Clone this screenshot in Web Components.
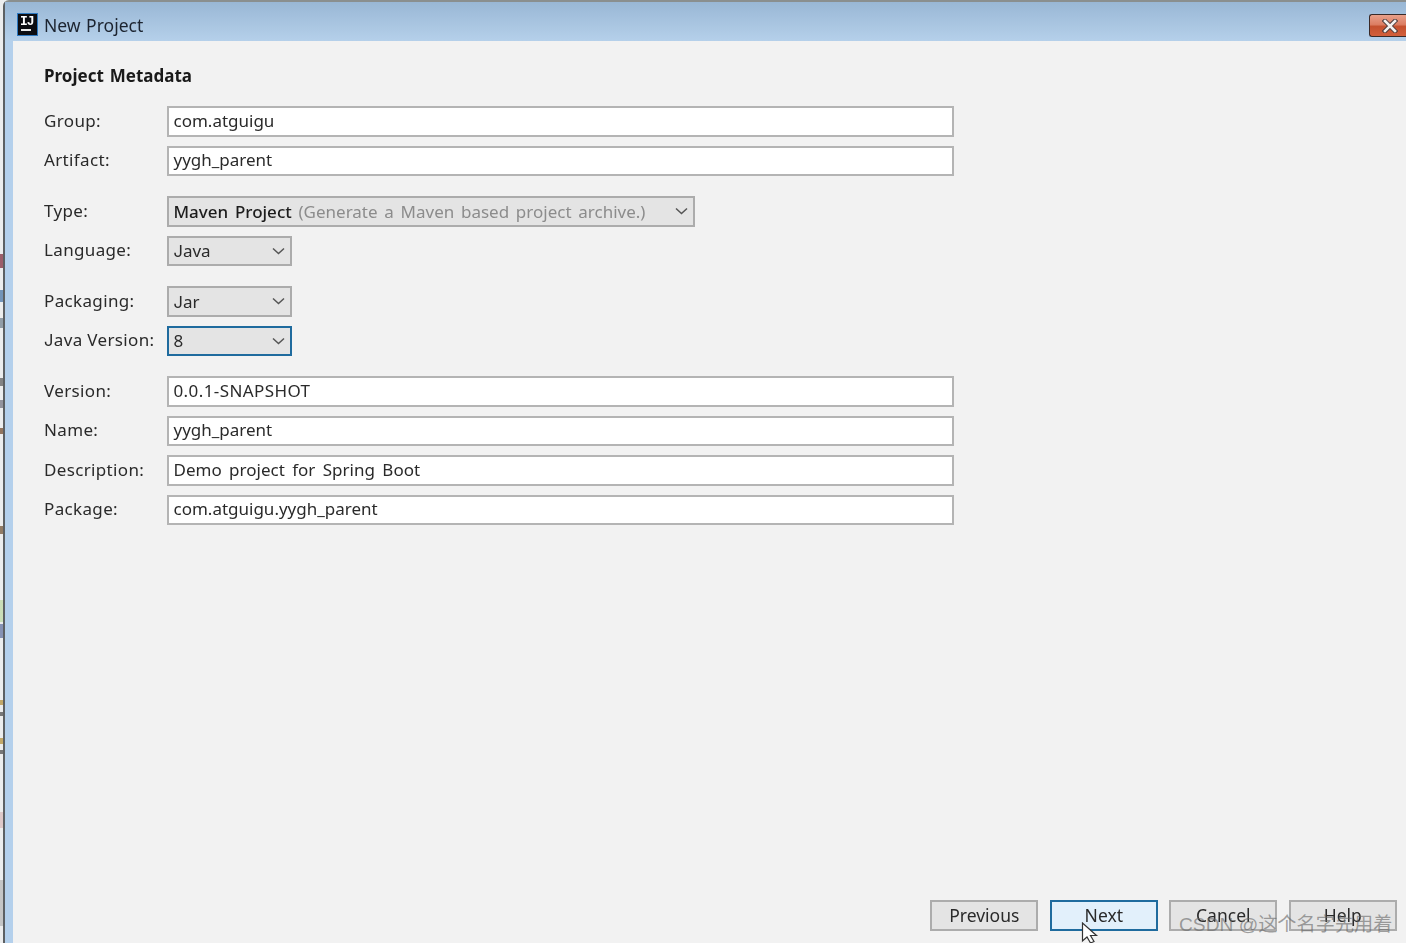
<!DOCTYPE html>
<html>
<head>
<meta charset="utf-8">
<style>
  html, body { margin: 0; height: 100%; background: #f2f2f2; overflow: hidden; }
  body { font-family: "Noto Sans", "Noto Sans CJK SC", sans-serif; }
</style>
</head>
<body>
<template id="tpl-window">
  <style>
    :host { display: flex; height: 943px; position: relative; background: #eceff1; color: #222; overflow: hidden; filter: blur(0.35px); }
    .edge { width: 3px; flex: none; opacity: 0.7; background: linear-gradient(180deg, #ececec 0 254px, #7a2030 254px 268px, #ececec 268px 290px, #3f6da0 290px 302px, #ececec 302px 318px, #6a7a88 318px 328px, #ececec 328px 378px, #555 378px 386px, #ececec 386px 400px, #6d6d7a 400px 408px, #ececec 408px 428px, #6a4020 428px 434px, #ececec 434px 526px, #6a4a2a 526px 534px, #ececec 534px 600px, #bcd7a0 600px 622px, #ececec 622px 624px, #5a6a9a 624px 638px, #ececec 638px 700px, #b08a30 700px 705px, #ececec 705px 712px, #444 712px 716px, #ececec 716px 738px, #b08a30 738px 744px, #ececec 744px 750px, #444 750px 754px, #ececec 754px 812px, #d8b8b8 812px 828px, #ececec 828px 880px, #b4b4b4 880px 926px, #ececec 926px); }
    .frame { flex: 1; display: flex; flex-direction: column; border-left: 2px solid #5c6063; border-top: 2px solid #8a8f8f; border-top-left-radius: 6px; background: #b4d0ec; min-width: 0; }
    .title { height: 39px; flex: none; box-sizing: border-box; display: flex; align-items: center; padding: 6px 0 0 12px; gap: 6px; background: linear-gradient(180deg, #99b7d5 0%, #b5d0ea 100%); font-size: 17.5px; word-spacing: 1px; color: #1c2430; }
    .logo { width: 21px; height: 23px; flex: none; box-sizing: border-box; background: #0c0d12; border: 1px solid #2d78c0; position: relative; color: #fff; font: bold 13px/15px "Liberation Mono", monospace; padding-left: 2px; letter-spacing: -1px; word-spacing: 0; margin-top: -1px; }
    .logo::after { content: ""; position: absolute; left: 3px; bottom: 4px; width: 10px; height: 2px; background: #e8e8e8; }
    .close { margin-left: auto; margin-top: 2px; width: 37px; height: 23px; box-sizing: border-box; border: 1px solid #3a2a28; border-right: none; border-radius: 3px 0 0 3px; background: linear-gradient(180deg, #e8a08a 0%, #dc7e63 45%, #c4502e 55%, #d2603c 100%); display: flex; align-items: center; justify-content: center; padding-left: 4px; }
    .body { flex: 1; margin-left: 8px; background: #f2f2f2; display: flex; flex-direction: column; min-height: 0; }
  </style>
  <div class="edge"></div>
  <div class="frame">
    <div class="title">
      <div class="logo">IJ</div>
      <span>New Project</span>
      <div class="close">
        <svg width="16" height="14" viewBox="0 0 16 14"><path d="M3 2l10 10M13 2L3 12" stroke="#4a3a3a" stroke-width="4.5" stroke-linecap="square" fill="none"/><path d="M3 2l10 10M13 2L3 12" stroke="#f4f0ee" stroke-width="2.6" stroke-linecap="square" fill="none"/></svg>
      </div>
    </div>
    <div class="body"><slot></slot></div>
  </div>
</template>

<template id="tpl-form">
  <style>
    :host { display: flex; flex-direction: column; flex: 1; padding: 23px 0 0 31px; min-height: 0; }
    h1 { margin: 0; font-size: 17px; line-height: 24px; font-weight: 700; color: #1a1a1a; word-spacing: 1.5px; }
    .rows { display: flex; flex-direction: column; gap: 20px; margin-top: 18px; width: 910px; }
  </style>
  <h1>Project Metadata</h1>
  <div class="rows"><slot></slot></div>
</template>

<template id="tpl-group">
  <style>
    :host { display: flex; flex-direction: column; gap: 9px; }
  </style>
  <slot></slot>
</template>

<template id="tpl-row">
  <style>
    :host { display: flex; align-items: center; height: 30.5px; font-size: 17px; color: #2a2a2a; word-spacing: 3px; }
    label { width: 122.5px; flex: none; margin-top: -2px; letter-spacing: 0.35px; word-spacing: 0; }
    .input { flex: 1; height: 100%; box-sizing: border-box; border: 2px solid #b4b4b4; background: #fff; padding-left: 5px; display: flex; align-items: center; white-space: pre; }
    span { margin-top: -2px; }
  </style>
  <label></label>
  <div class="input"><span><slot></slot></span></div>
</template>

<template id="tpl-combo">
  <style>
    :host { display: flex; align-items: center; height: 30.5px; font-size: 17px; color: #2a2a2a; word-spacing: 2.3px; }
    label { width: 122.5px; flex: none; margin-top: -2px; letter-spacing: 0.35px; word-spacing: 0; }
    label i, ::slotted(i) { font: inherit; font-family: Inter, sans-serif; font-size: 16.5px; }
    .box { height: 100%; box-sizing: border-box; border: 2px solid #acacac; background: #e4e4e4; padding-left: 5px; display: flex; align-items: center; white-space: pre; }
    :host([focused]) .box { border-color: #1f6b9e; }
    svg { margin-left: auto; margin-right: 5px; flex: none; }
    .val { display: block; }
    ::slotted(span) { color: #8c8c8c; }
  </style>
  <label></label>
  <div class="box"><span class="val"><slot></slot></span>
    <svg width="13" height="8" viewBox="0 0 13 8"><path d="M1 1.5l5.5 5 5.5-5" stroke="#555" stroke-width="1.5" fill="none"/></svg>
  </div>
</template>

<template id="tpl-buttons">
  <style>
    :host { display: flex; margin-top: auto; justify-content: flex-end; gap: 11.5px; padding: 0 9.2px 12px 0; position: relative; }
  </style>
  <slot></slot>
</template>

<template id="tpl-button">
  <style>
    :host { display: flex; align-items: center; justify-content: center; width: 108px; height: 31px; box-sizing: border-box; border: 2px solid #acacac; background: #e4e4e4; font-size: 17.5px; color: #2a2a2a; padding-bottom: 2px; }
    :host([primary]) { border-color: #1f6b9e; background: #e2f0fb; }
  </style>
  <slot></slot>
</template>

<template id="tpl-overlay">
  <style>
    :host { position: absolute; left: 0; top: 0; width: 0; height: 0; }
    svg { position: absolute; left: 1081px; top: 922px; }
    .mark { position: absolute; left: 1179px; top: 909px; white-space: nowrap; font-size: 19.2px; color: rgba(100, 100, 100, 0.6); font-family: "Liberation Sans", "Noto Sans CJK SC", sans-serif; }
  </style>
  <svg width="20" height="22" viewBox="0 0 20 22"><path d="M1.5 1v18l4.5-4 3.5 6 3.5-1.5-3.5-6h6z" fill="#fff" stroke="#333" stroke-width="1.2"/></svg>
  <div class="mark">CSDN @这个名字先用着</div>
</template>

<new-project-window>
  <metadata-form>
    <form-group>
      <text-row label="Group:">com.atguigu</text-row>
      <text-row label="Artifact:">yygh_parent</text-row>
    </form-group>
    <form-group>
      <combo-row label="Type:" width="528"><b style="font-weight:500;color:#1c1c1c">Maven Project</b> <span>(Generate a Maven based project archive.)</span></combo-row>
      <combo-row label="Language:" width="125"><i>J</i>ava</combo-row>
    </form-group>
    <form-group>
      <combo-row label="Packaging:" width="125"><i>J</i>ar</combo-row>
      <combo-row label="Java Version:" width="125" focused>8</combo-row>
    </form-group>
    <form-group>
      <text-row label="Version:"><span style="letter-spacing:.4px">0.0.1-SNAPSHOT</span></text-row>
      <text-row label="Name:">yygh_parent</text-row>
      <text-row label="Description:">Demo project for Spring Boot</text-row>
      <text-row label="Package:">com.atguigu.yygh_parent</text-row>
    </form-group>
  </metadata-form>
  <button-bar>
    <wizard-button>Previous</wizard-button>
    <wizard-button primary>Next</wizard-button>
    <wizard-button>Cancel</wizard-button>
    <wizard-button>Help</wizard-button>
  </button-bar>
</new-project-window>
<screen-overlay></screen-overlay>

<script>
  function simple(name, tplId, setup) {
    customElements.define(name, class extends HTMLElement {
      constructor() {
        super();
        this.attachShadow({ mode: 'open' });
        this.shadowRoot.appendChild(document.getElementById(tplId).content.cloneNode(true));
      }
      connectedCallback() {
        if (setup) setup(this);
      }
    });
  }

  const setLabel = el => {
    el.shadowRoot.querySelector('label').innerHTML = el.getAttribute('label').replace(/^J/, '<i>J</i>');
  };

  simple('new-project-window', 'tpl-window');
  simple('metadata-form', 'tpl-form');
  simple('form-group', 'tpl-group');
  simple('text-row', 'tpl-row', setLabel);
  simple('combo-row', 'tpl-combo', el => {
    setLabel(el);
    el.shadowRoot.querySelector('.box').style.width = el.getAttribute('width') + 'px';
  });
  simple('button-bar', 'tpl-buttons');
  simple('wizard-button', 'tpl-button');
  simple('screen-overlay', 'tpl-overlay');
</script>
</body>
</html>
